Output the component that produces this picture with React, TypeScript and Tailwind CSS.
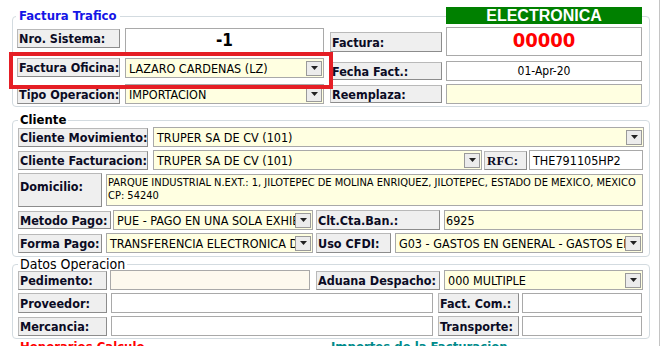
import React from 'react';

const Btn: React.FC<{ label: string; w: string; h?: string; className?: string; serif?: boolean }> = ({ label, w, h = 'h-[19px]', className = '', serif }) => (
  <div
    className={`${w} ${h} ${className} shrink-0 flex items-center pl-[1px] pt-[1px] bg-[#efefef] border border-[#b9b9b9] border-r-[#8c8c8c] border-b-[#8c8c8c] font-bold text-[#0b0b24] whitespace-nowrap overflow-hidden leading-[14px] ${
      serif ? "font-['Liberation_Serif',serif] text-[13px] pl-[2px]" : 'text-[12.5px]'
    }`}
  >
    {label}
  </div>
);

const Box: React.FC<{ w: string; h?: string; bg?: string; className?: string; children?: React.ReactNode }> = ({ w, h = 'h-[20px]', bg = 'bg-white', className = '', children }) => (
  <div className={`${w} ${h} ${bg} ${className} shrink-0 border border-[#a9a9a9] text-black whitespace-nowrap overflow-hidden`}>
    {children}
  </div>
);

const Select: React.FC<{ w: string; text: string; h?: string; className?: string }> = ({ w, text, h = 'h-[20px]', className = '' }) => (
  <div className={`${w} ${h} ${className} shrink-0 flex items-center bg-[#ffffe1] border border-[#a9a9a9] text-[12.5px] text-black leading-[15px]`}>
    <span className="flex-1 pl-[3px] whitespace-nowrap overflow-hidden">{text}</span>
    <span className="w-[16px] h-[15px] mr-[1px] shrink-0 flex items-center justify-center bg-[#ececec] border border-[#9a9a9a]">
      <svg width="7" height="4" viewBox="0 0 7 4">
        <path d="M0 0h7L3.5 4z" fill="#222" />
      </svg>
    </span>
  </div>
);

const App: React.FC = () => {
  return (
    <div className="w-[667px] h-[346px] overflow-hidden bg-white font-['DejaVu_Sans_Condensed','DejaVu_Sans',sans-serif]">
      <div className="relative w-[660px] h-full border-r border-[#c4c4c4] pl-[12px] pt-[8px]">
        {/* Factura Trafico */}
        <fieldset className="w-[638px] border border-[#d3dbe0] rounded-[4px] pl-[4px] pr-[5px] pt-[3px] pb-[2px]">
          <legend className="ml-[-1px] px-[3px] text-[13px] leading-[16px] font-bold text-[#1515e6]">Factura Trafico</legend>
          <div className="grid grid-cols-[103px_199px_112px_196px] grid-rows-[29px_24px_20px] gap-x-[5px] gap-y-[2px]">
            <Btn label="Nro. Sistema:" w="w-[103px]" className="mt-[2px]" />
            <Box w="w-[199px]" h="h-[28px]" className="mt-[1px] text-center text-[17px] leading-[20px] font-bold pt-[1px]">-1</Box>
            <Btn label="Factura:" w="w-[112px]" h="h-[20px]" className="mt-[5px] ml-[1px]" />
            <div className="flex flex-col -mt-[20px]">
              <div className="h-[17px] bg-[#008000] text-white text-center text-[16px] leading-[17px] font-bold font-['Liberation_Sans',sans-serif]">ELECTRONICA</div>
              <Box w="w-[196px]" h="h-[29px]" className="mt-[3px] text-center text-[20px] leading-[24px] font-bold">
                <span className="text-[#ff0000]">00000</span>
              </Box>
            </div>

            <Btn label="Factura Oficina:" w="w-[103px]" />
            <Select w="w-[199px]" text="LAZARO CARDENAS (LZ)" />
            <Btn label="Fecha Fact.:" w="w-[112px]" h="h-[18px]" className="mt-[4px] ml-[1px]" />
            <Box w="w-[196px]" className="mt-[3px] flex items-center justify-center text-[12px] leading-[15px]">01-Apr-20</Box>

            <Btn label="Tipo Operacion:" w="w-[103px]" className="mt-[1px]" />
            <Select w="w-[199px]" text="IMPORTACION" />
            <Btn label="Reemplaza:" w="w-[112px]" h="h-[18px]" className="mt-[1px] ml-[1px]" />
            <Box w="w-[196px]" bg="bg-[#ffffe1]" />
          </div>
        </fieldset>

        {/* Cliente */}
        <fieldset className="w-[638px] mt-[6px] border border-[#d3dbe0] rounded-[4px] pl-[5px] pr-[5px] pb-[3px]">
          <legend className="px-[2px] text-[13px] leading-[14px] font-bold text-black">Cliente</legend>
          <div className="flex flex-col gap-[3px]">
            <div className="flex items-center h-[20px]">
              <Btn label="Cliente Movimiento:" w="w-[130px]" />
              <Select w="w-[491px]" text="TRUPER SA DE CV (101)" className="ml-[5px]" />
            </div>
            <div className="flex items-center h-[20px]">
              <Btn label="Cliente Facturacion:" w="w-[130px]" />
              <Select w="w-[329px]" text="TRUPER SA DE CV (101)" className="ml-[5px]" />
              <Btn label="RFC:" w="w-[43px]" serif className="ml-[2px]" />
              <Box w="w-[114px]" className="ml-[2px] flex items-center pl-[3px] text-[12.5px] leading-[15px]">THE791105HP2</Box>
            </div>
            <div className="flex items-center h-[34px]">
              <Btn label="Domicilio:" w="w-[84px]" h="h-[34px]" className="items-start pt-[6px]" />
              <Box w="w-[537px]" h="h-[32px]" bg="bg-[#ffffe1]" className="ml-[4px] text-[11px] leading-[13px] pl-[1px] pt-[1px]">
                <div>PARQUE INDUSTRIAL N.EXT.: 1, JILOTEPEC DE MOLINA ENRIQUEZ, JILOTEPEC, ESTADO DE MEXICO, MEXICO</div>
                <div>CP: 54240</div>
              </Box>
            </div>
            <div className="flex items-center h-[20px]">
              <Btn label="Metodo Pago:" w="w-[93px]" h="h-[18px]" />
              <Select w="w-[200px]" text="PUE - PAGO EN UNA SOLA EXHIBICION" className="ml-[2px]" />
              <Btn label="Clt.Cta.Ban.:" w="w-[124px]" h="h-[20px]" className="ml-[3px]" />
              <Box w="w-[199px]" bg="bg-[#ffffe1]" className="ml-[4px] flex items-center pl-[1px] text-[12.5px] leading-[15px]">6925</Box>
            </div>
            <div className="flex items-center h-[20px]">
              <Btn label="Forma Pago:" w="w-[84px]" />
              <Select w="w-[207px]" text="TRANSFERENCIA ELECTRONICA DE FONDOS" className="ml-[4px]" />
              <Btn label="Uso CFDI:" w="w-[75px]" h="h-[20px]" className="ml-[3px]" />
              <Select w="w-[248px]" text="G03 - GASTOS EN GENERAL - GASTOS EN GENERAL" className="ml-[4px]" />
            </div>
          </div>
        </fieldset>

        {/* Datos Operacion */}
        <fieldset className="w-[638px] mt-[1px] border border-[#d3dbe0] rounded-[4px] pl-[5px] pr-[5px] pb-[2px]">
          <legend className="px-[2px] text-[14px] leading-[12px] text-black">Datos Operacion</legend>
          <div className="flex flex-col gap-[3px]">
            <div className="flex items-center h-[20px]">
              <Btn label="Pedimento:" w="w-[89px]" />
              <Box w="w-[200px]" bg="bg-[#fdf9ee]" className="ml-[3px]" />
              <Btn label="Aduana Despacho:" w="w-[124px]" className="ml-[6px]" />
              <Select w="w-[199px]" text="000 MULTIPLE" className="ml-[4px]" />
            </div>
            <div className="flex items-center h-[20px]">
              <Btn label="Proveedor:" w="w-[89px]" h="h-[20px]" />
              <Box w="w-[322px]" className="ml-[4px]" />
              <Btn label="Fact. Com.:" w="w-[81px]" h="h-[20px]" className="ml-[5px]" />
              <Box w="w-[120px]" className="ml-[3px]" />
            </div>
            <div className="flex items-center h-[20px]">
              <Btn label="Mercancia:" w="w-[89px]" />
              <Box w="w-[322px]" className="ml-[4px]" />
              <Btn label="Transporte:" w="w-[81px]" h="h-[20px]" className="ml-[5px]" />
              <Box w="w-[120px]" className="ml-[3px]" />
            </div>
          </div>
        </fieldset>

        <div className="flex text-[13px] font-bold leading-[14px] mt-[1px]">
          <span className="ml-[8px] w-[311px] text-[#ff0000]">Honorarios Calculo</span>
          <span className="text-[#008b8b]">Importes de la Facturacion</span>
        </div>

        {/* annotation */}
        <div className="absolute left-[9px] top-[52px] w-[324px] h-[37px] border-[4px] border-[#e51e25] pointer-events-none" />
      </div>
    </div>
  );
};

export default App;
